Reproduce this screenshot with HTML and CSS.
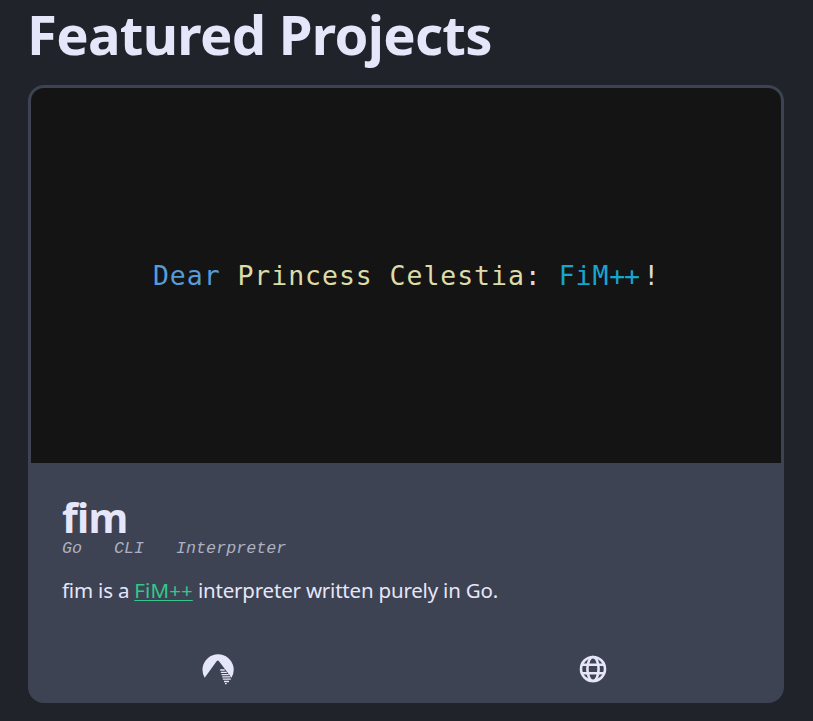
FILE: index.html
```html
<!DOCTYPE html>
<html lang="en">
<head>
<meta charset="utf-8">
<title>Featured Projects</title>
<link rel="stylesheet" href="styles.css">
</head>
<body>
<main class="projects">
  <h1 class="title">Featured Projects</h1>
  <article class="card">
    <div class="banner"><code class="code"><span class="keyword">Dear</span> <span class="name">Princess Celestia</span>: <span class="type">FiM<span class="plus">++</span></span>!</code></div>
    <div class="content">
      <h2 class="name-heading">fim</h2>
      <ul class="tags"><li>Go</li><li>CLI</li><li>Interpreter</li></ul>
      <p class="description">fim is a <a class="link" href="#">FiM++</a> interpreter written purely in Go.</p>
    </div>
    <div class="actions">
      <a class="action" href="#" aria-label="Source">
        <svg class="icon" width="34" height="34" viewBox="0 0 34 34">
          <path d="M3.7 25.8A15.6 15.6 0 1 1 30.5 25.8L18 9.2a1.5 1.5 0 0 0-2.4 0Z" fill="currentColor"/>
          <path class="strata" d="M19.2 18h4.5M19.8 20.3h6M20.5 22.6h7.2M21.2 24.9h8.2M21.8 27.2h8M23 29.5h5M24 31.6h1.7"/>
        </svg>
      </a>
      <a class="action" href="#" aria-label="Website">
        <svg class="icon globe" width="34" height="34" viewBox="0 0 34 34">
          <circle cx="17" cy="17" r="12"/>
          <ellipse cx="17" cy="17" rx="5.6" ry="12"/>
          <path d="M6 12.8h22M6 21.2h22"/>
        </svg>
      </a>
    </div>
  </article>
</main>
</body>
</html>
```
FILE: styles.css
```css
* { box-sizing: border-box; }
body {
  margin: 0;
  background: #20232a;
  color: #e6e6fa;
  font-family: "Noto Sans", sans-serif;
}
.projects { width: 756px; margin-left: 28px; }
.title {
  margin: 0 0 0 -1px;
  height: 85px;
  font-size: 54.4px;
  letter-spacing: -0.7px;
  line-height: 68px;
  font-weight: 700;
  white-space: nowrap;
}
.card {
  height: 618px;
  border: 3px solid #3d4352;
  border-radius: 16px;
  background: #3d4352;
  overflow: hidden;
}
.banner {
  height: 375px;
  display: flex;
  align-items: center;
  justify-content: center;
  background: #141414;
}
.code {
  padding-left: 1px;
  font-family: "DejaVu Sans Mono", monospace;
  font-size: 26.5px;
  letter-spacing: 0.95px;
  line-height: 36px;
  color: #dcdcdc;
  white-space: pre;
}
.keyword { color: #569cd6; }
.name { color: #dcdcaa; }
.type { color: #16a6d0; }
.plus { letter-spacing: -1.4px; margin-right: 4.7px; }
.content { height: 173px; padding: 31px 31px 0; }
.name-heading {
  margin: 0;
  font-size: 40.8px;
  letter-spacing: -0.7px;
  line-height: 47px;
  font-weight: 700;
}
.tags {
  display: flex;
  gap: 32px;
  margin: -2px 0 0;
  padding: 0;
  list-style: none;
  font: italic 16.7px/20px "Liberation Mono", monospace;
  color: #adb0c0;
}
.description {
  margin: 17px 0 0;
  font-size: 20.5px;
  line-height: 29px;
  letter-spacing: -0.2px;
  white-space: nowrap;
}
.link {
  color: #32c88c;
  letter-spacing: 0.1px;
  text-decoration: underline;
  text-underline-offset: 2px;
  text-decoration-thickness: 1px;
}
.actions { display: grid; grid-template-columns: 1fr 1fr; height: 64px; padding-top: 2px; margin-left: -1px; margin-right: 1px; }
.action { display: flex; align-items: center; justify-content: center; color: #e6e6fa; }
.icon { display: block; }
.strata { stroke: currentColor; stroke-width: 1.3; fill: none; }
.globe { fill: none; stroke: currentColor; stroke-width: 2.6; }
```
